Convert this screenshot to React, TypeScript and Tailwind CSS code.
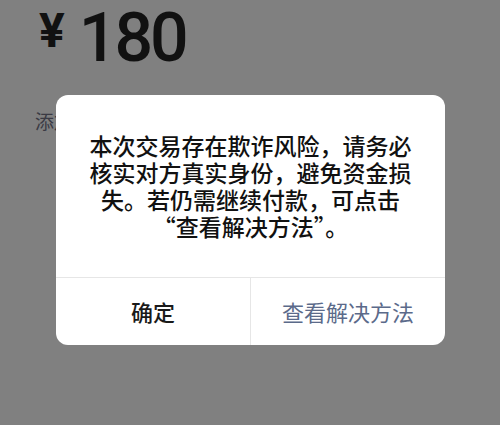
export default function App() {
  return (
    <div className="relative w-[500px] h-[425px] overflow-hidden bg-[#808080] font-['Noto_Sans_CJK_SC','Noto_Sans',sans-serif]">
      {/* Amount */}
      <div className="flex items-start pl-[39px] text-[#111111]">
        <span className="mt-[3px] font-['Roboto',sans-serif] text-[48px] font-bold leading-[56px]">¥</span>
        <span className="ml-[14px] font-['Roboto',sans-serif] text-[68px] font-medium leading-[76px] tracking-[-3px]">180</span>
      </div>
      <div className="mt-[35px] pl-[35px] text-[19px] leading-[19px] text-[#3a3a44]">添加转账说明</div>

      {/* Alert */}
      <div className="absolute left-[56px] top-[95px] flex h-[250px] w-[389px] flex-col overflow-hidden rounded-[12px] bg-white">
        <div className="flex-1 px-[20px] pt-[37px] text-center text-[23px] leading-[27px] font-medium whitespace-nowrap text-[#111111]">
          本次交易存在欺诈风险，请务必
          <br />
          核实对方真实身份，避免资金损
          <br />
          失。若仍需继续付款，可点击
          <br />
          “查看解决方法”。
        </div>
        <div className="flex h-[68px] border-t border-[#e6e6e6]">
          <button className="flex flex-1 items-center justify-center text-[22px] font-medium text-[#1a1a1a]">确定</button>
          <button className="flex flex-1 items-center justify-center border-l border-[#e6e6e6] text-[22px] text-[#5b6a8a]">查看解决方法</button>
        </div>
      </div>
    </div>
  );
}
